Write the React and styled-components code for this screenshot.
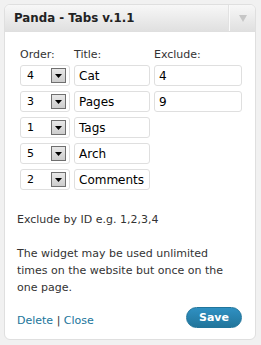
import React from "react";
import styled, { createGlobalStyle } from "styled-components";

const Global = createGlobalStyle`
  html, body { margin: 0; padding: 0; background: #f1f1f1; }
  body { font-family: "DejaVu Sans", Verdana, sans-serif; }
`;

const Page = styled.div`
  padding: 4px 5px 6px 4px;
`;

const Widget = styled.div`
  border: 1px solid #dfdfdf;
  border-radius: 6px;
  background: #fff;
  overflow: hidden;
`;

const Header = styled.div`
  display: flex;
  align-items: stretch;
  height: 26px;
  background: linear-gradient(#f7f7f7, #e0e0e0);
  border-bottom: 1px solid #dfdfdf;
`;

const Title = styled.h3`
  flex: 1;
  margin: 0;
  padding-left: 9px;
  display: flex;
  align-items: center;
  font-family: "DejaVu Sans", sans-serif;
  font-size: 11.8px;
  font-weight: bold;
  color: #222;
`;

const Toggle = styled.div`
  width: 25px;
  border-left: 1px solid #fafafa;
  box-shadow: -1px 0 0 #e2e2e2;
  display: flex;
  align-items: center;
  justify-content: center;
  padding-top: 1px;
`;

const Body = styled.div`
  padding: 16px 13px 11px 15px;
  font-size: 11px;
  color: #333;
`;

const FormGrid = styled.div`
  display: grid;
  grid-template-columns: 50px 76px 88px;
  column-gap: 4px;
  row-gap: 5px;
  align-items: center;
`;

const Label = styled.div`
  font-size: 11px;
  line-height: 14px;
  color: #333;
  margin-bottom: -2px;
`;

const Box = styled.div`
  box-sizing: border-box;
  height: 21px;
  border: 1px solid #dfdfdf;
  border-radius: 3px;
  background: #fff;
  display: flex;
  align-items: center;
  font-size: ${(p) => (p.$small ? "11px" : "12px")};
  color: #000;
  padding-left: ${(p) => (p.$small ? "6px" : "4px")};
`;

const SelectBox = styled(Box)`
  justify-content: space-between;
  padding-right: 3px;
`;

const DropBtn = styled.span`
  width: 13px;
  height: 13px;
  border: 1px solid #6f6f6f;
  background: linear-gradient(#e8e8e8, #cdcdcd);
  display: flex;
  align-items: center;
  justify-content: center;
`;

const Note = styled.p`
  margin: ${(p) => p.$top}px 0 0 -3px;
  font-size: 11px;
  line-height: 17px;
  color: #333;
`;

const Footer = styled.div`
  display: flex;
  justify-content: space-between;
  align-items: center;
  margin: 11px 0 0 -3px;
`;

const Links = styled.div`
  font-size: 11px;
  color: #333;
  margin-top: 5px;
`;

const Link = styled.a`
  color: #21759b;
  text-decoration: none;
`;

const SaveButton = styled.button`
  width: 56px;
  height: 21px;
  border: 1px solid #21759b;
  border-radius: 11px;
  background: linear-gradient(#2f90c2, #21759b);
  color: #fff;
  font-family: "DejaVu Sans", sans-serif;
  font-size: 11px;
  font-weight: bold;
  padding: 0;
`;

const rows = [
  { order: 4, title: "Cat", exclude: "4" },
  { order: 3, title: "Pages", exclude: "9" },
  { order: 1, title: "Tags" },
  { order: 5, title: "Arch" },
  { order: 2, title: "Comments" },
];

const Arrow = ({ color = "#000", w = 7, h = 4 }) => (
  <svg width={w} height={h} viewBox={`0 0 ${w} ${h}`}>
    <polygon points={`0,0 ${w},0 ${w / 2},${h}`} fill={color} />
  </svg>
);

export default function App() {
  return (
    <>
      <Global />
      <Page>
        <Widget>
          <Header>
            <Title>Panda - Tabs v.1.1</Title>
            <Toggle>
              <Arrow color="#c6c6c6" w={8} h={7} />
            </Toggle>
          </Header>
          <Body>
            <FormGrid>
              <Label>Order:</Label>
              <Label>Title:</Label>
              <Label>Exclude:</Label>
              {rows.map((r) => (
                <React.Fragment key={r.title}>
                  <SelectBox $small>
                    {r.order}
                    <DropBtn>
                      <Arrow w={7} h={4} />
                    </DropBtn>
                  </SelectBox>
                  <Box>{r.title}</Box>
                  {r.exclude !== undefined ? <Box>{r.exclude}</Box> : <span />}
                </React.Fragment>
              ))}
            </FormGrid>
            <Note $top={21}>Exclude by ID e.g. 1,2,3,4</Note>
            <Note $top={17}>
              The widget may be used unlimited times on the website but once on the one page.
            </Note>
            <Footer>
              <Links>
                <Link href="#">Delete</Link> | <Link href="#">Close</Link>
              </Links>
              <SaveButton>Save</SaveButton>
            </Footer>
          </Body>
        </Widget>
      </Page>
    </>
  );
}
